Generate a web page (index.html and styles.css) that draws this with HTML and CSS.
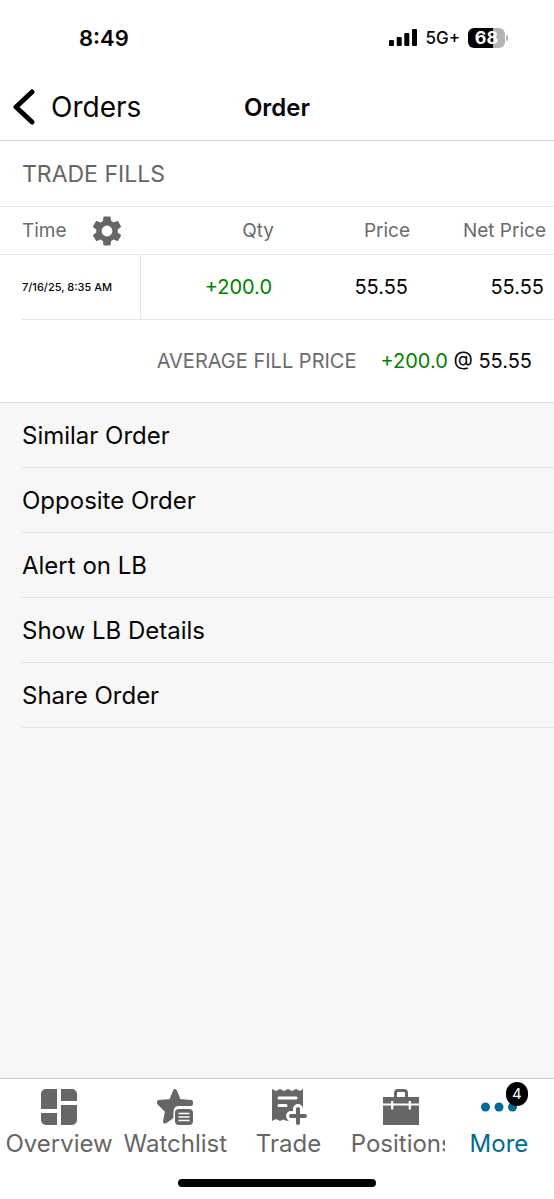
FILE: index.html
```html
<!DOCTYPE html>
<html lang="en">
<head>
<meta charset="utf-8">
<meta name="viewport" content="width=device-width, initial-scale=1">
<title>Order</title>
<link rel="stylesheet" href="styles.css">
</head>
<body>
<div class="app">
  <div class="status">
    <span class="clock">8:49</span>
    <div class="indicators">
      <svg class="signal" viewBox="0 0 28 18" aria-hidden="true">
        <rect x="0" y="11" width="5" height="6" rx="1"/><rect x="7.7" y="8" width="5" height="9" rx="1"/><rect x="15.3" y="4" width="5" height="13" rx="1"/><rect x="23" y="0" width="5" height="17" rx="1"/>
      </svg>
      <span class="network">5G+</span>
      <span class="battery">68</span>
    </div>
  </div>
  <header class="header">
    <button class="back" type="button">
      <svg class="chevron" viewBox="0 0 22 36" aria-hidden="true"><path d="M19 3 3 18l16 15"/></svg>
      <span>Orders</span>
    </button>
    <h1 class="title">Order</h1>
  </header>
  <main class="content">
    <section class="fills">
      <h2 class="section-title">TRADE FILLS</h2>
      <table class="table">
        <thead>
          <tr>
            <th class="time"><div class="time-head">Time
              <button class="settings" type="button" aria-label="Column settings">
                <svg viewBox="2 2 20 20" aria-hidden="true"><path d="M19.14 12.94c.04-.3.06-.61.06-.94s-.02-.64-.07-.94l2.03-1.58a.49.49 0 0 0 .12-.61l-1.92-3.32a.49.49 0 0 0-.59-.22l-2.39.96a7 7 0 0 0-1.62-.94l-.36-2.54a.48.48 0 0 0-.48-.41h-3.84a.47.47 0 0 0-.47.41l-.36 2.54c-.59.24-1.13.57-1.62.94l-2.39-.96a.48.48 0 0 0-.59.22L2.74 8.87a.47.47 0 0 0 .12.61l2.03 1.58a6 6 0 0 0 0 1.88l-2.03 1.58a.49.49 0 0 0-.12.61l1.92 3.32c.12.22.37.29.59.22l2.39-.96c.5.38 1.03.7 1.62.94l.36 2.54c.05.24.24.41.48.41h3.84c.24 0 .44-.17.47-.41l.36-2.54a6.5 6.5 0 0 0 1.62-.94l2.39.96c.22.08.47 0 .59-.22l1.92-3.32a.47.47 0 0 0-.12-.61zM12 15.600a3.600 3.600 0 1 1 0-7.200 3.600 3.600 0 0 1 0 7.200"/></svg>
              </button></div></th>
            <th>Qty</th><th>Price</th><th>Net Price</th>
          </tr>
        </thead>
        <tbody>
          <tr><td class="time"><div class="stamp"><div class="stamp-text">7/16/25, 8:35 AM</div></div></td><td class="green">+200.0</td><td>55.55</td><td>55.55</td></tr>
        </tbody>
      </table>
      <div class="average"><span class="average-label">AVERAGE FILL PRICE</span><span><span class="green">+200.0</span> @ 55.55</span></div>
    </section>
    <div class="actions">
      <button class="action" type="button">Similar Order</button>
      <button class="action" type="button">Opposite Order</button>
      <button class="action" type="button">Alert on LB</button>
      <button class="action" type="button">Show LB Details</button>
      <button class="action" type="button">Share Order</button>
    </div>
  </main>
  <footer class="footer">
    <nav class="tabs">
      <a class="tab" href="#overview">
        <svg class="icon" viewBox="0 0 36 36" aria-hidden="true"><path d="M5 0h11v20H0V5a5 5 0 0 1 5-5M20 0h11a5 5 0 0 1 5 5v7H20zM0 24h16v12H5a5 5 0 0 1-5-5zM20 16h16v15a5 5 0 0 1-5 5H20z"/></svg>
        <span>Overview</span></a>
      <a class="tab" href="#watchlist">
        <svg class="icon" viewBox="0 0 36 36" aria-hidden="true"><path class="star" d="M18 2 22 12l12 1v2H22q-7 0-7.500 7v6L8 32.500 10 22 2 14v-1l12-1z"/><rect x="18" y="20" width="18" height="16" rx="4"/><path class="cut" d="M21.500 24.500h11M21.500 28h11M21.500 31.500h11" stroke-width="1.600"/></svg>
        <span>Watchlist</span></a>
      <a class="tab" href="#trade">
        <svg class="icon" viewBox="0 0 36 36" aria-hidden="true"><path d="m1 0 4 2 4-2 4 2 4-2 4 2 4-2 4 2 3-2v32l-4-1.500-4 1.500-4-1.500-4 1.500-4-1.500L9 32l-4-2-4 2z"/><path class="cut round" d="M8 9h17M8 16.500h7" stroke-width="3"/><path class="cut round" d="M27 20v14M20 27h14" stroke-width="10"/><path class="plus" d="M27 20v14M20 27h14"/></svg>
        <span>Trade</span></a>
      <a class="tab" href="#positions">
        <svg class="icon" viewBox="0 0 36 36" aria-hidden="true"><path d="M0 8h36v28H0z"/><path class="handle" d="M12.500 8V4q0-2.500 2.500-2.500h6q2.500 0 2.500 2.500v4"/><path class="cut" d="M0 15.500h36M9.200 12v8.500M26.800 12v8.500" stroke-width="2.200"/></svg>
        <span class="clipped">Positions</span></a>
      <a class="tab tab-active" href="#more" aria-current="page">
        <span class="icon-wrap"><svg class="icon" viewBox="0 0 36 36" aria-hidden="true"><circle cx="4.500" cy="18" r="4.500"/><circle cx="18" cy="18" r="4.500"/><circle cx="31.500" cy="18" r="4.500"/></svg><span class="badge">4</span></span>
        <span>More</span></a>
    </nav>
    <div class="home"></div>
  </footer>
</div>
</body>
</html>
```
FILE: styles.css
```css
* { box-sizing: border-box; }
body {
  margin: 0;
  background: #fff;
  color: #050505;
  font-family: Inter, "Liberation Sans", sans-serif;
  font-size: 20px;
}
button {
  padding: 0;
  border: 0;
  background: none;
  color: inherit;
  font: inherit;
  cursor: pointer;
}
.app { display: flex; flex-direction: column; min-height: 100vh; }
.status {
  display: flex;
  align-items: center;
  justify-content: space-between;
  height: 74px;
  padding: 2px 49px 0 79px;
}
.clock { font-size: 22px; font-weight: 600; }
.indicators { display: flex; align-items: center; gap: 8px; }
.signal { width: 28px; height: 18px; }
.network { font-size: 17px; font-weight: 500; }
.battery {
  position: relative;
  width: 37px;
  height: 20px;
  border-radius: 6px;
  background: linear-gradient(90deg, #000 68%, #b4b4b4 68%);
  color: #fff;
  font-size: 18px;
  font-weight: 700;
  line-height: 20px;
  text-align: center;
}
.battery::after {
  content: "";
  position: absolute;
  top: 7px;
  right: -3px;
  width: 2px;
  height: 6px;
  border-radius: 0 2px 2px 0;
  background: #b4b4b4;
}
.header {
  display: grid;
  grid-template-columns: 1fr auto 1fr;
  align-items: center;
  height: 67px;
  padding: 0 13px;
  border-bottom: 1px solid #d2d2d2;
}
.back { display: flex; align-items: center; gap: 16px; font-size: 28px; }
.chevron {
  width: 22px;
  height: 36px;
  fill: none;
  stroke: #000;
  stroke-width: 5;
  stroke-linecap: round;
  stroke-linejoin: round;
}
.title { margin: 0; font-size: 24px; font-weight: 600; }
.content { flex: 1; background: #f7f7f7; }
.fills { background: #fff; border-bottom: 1px solid #e2e2e2; }
.section-title {
  margin: 0;
  padding: 2px 22px 0;
  color: #666;
  font-size: 23px;
  font-weight: 400;
  line-height: 63px;
  border-bottom: 1px solid #ebebeb;
}
.table { width: 100%; border-collapse: separate; border-spacing: 0; table-layout: fixed; }
.table th { height: 48px; padding: 0 8px 0 0; color: #6b6b6b; font-size: 19px; font-weight: 400; text-align: right; border-bottom: 1px solid #e6e6e6; }
.table td { height: 65px; padding: 0 10px 0 0; text-align: right; border-bottom: 1px solid #e6e6e6; }
.table .time { width: 146px; padding: 0; text-align: left; }
.table th.time { padding-left: 22px; }
.table td.time { padding-left: 22px; border-bottom: 0; }
.time-head { display: flex; align-items: center; gap: 25px; }
.settings { width: 30px; height: 30px; }
.settings svg { display: block; fill: #666; }
.stamp { height: 65px; border-bottom: 1px solid #e6e6e6; }
.stamp-text {
  display: flex;
  align-items: center;
  width: 119px;
  height: 100%;
  border-right: 1px solid #e6e6e6;
  font-size: 11px;
  font-weight: 500;
}
.green { color: #008000; }
.average {
  display: flex;
  align-items: center;
  justify-content: flex-end;
  gap: 24px;
  height: 82px;
  padding-right: 22px;
}
.average-label { color: #6b6b6b; }
.actions { display: flex; flex-direction: column; padding-left: 22px; }
.action { height: 65px; border-bottom: 1px solid #e2e2e2; font-size: 24px; text-align: left; }
.footer { background: #fff; border-top: 1px solid #ccc; }
.tabs { display: grid; grid-template-columns: 118fr 114fr 112fr 112fr 84fr; padding: 10px 13px 0 0; }
.tab {
  display: flex;
  flex-direction: column;
  align-items: center;
  gap: 4px;
  min-width: 0;
  color: #666;
  font-size: 24px;
  line-height: 30px;
  text-decoration: none;
}
.icon { display: block; width: 36px; height: 36px; fill: currentColor; }
.star { stroke: currentColor; stroke-width: 4; stroke-linejoin: round; }
.cut { fill: none; stroke: #fff; }
.round { stroke-linecap: round; }
.handle { fill: none; stroke: currentColor; stroke-width: 3; }
.plus { fill: none; stroke: currentColor; stroke-width: 4; stroke-linecap: round; }
.clipped { width: 94px; margin-right: 6px; overflow: hidden; }
.tab-active { color: #006b94; }
.icon-wrap { position: relative; }
.badge {
  position: absolute;
  top: -7px;
  right: -11px;
  width: 22px;
  height: 24px;
  border-radius: 12px;
  background: #000;
  color: #fff;
  font-size: 15px;
  line-height: 24px;
  text-align: center;
}
.home { width: 198px; height: 8px; margin: 20px auto 12px; border-radius: 4px; background: #000; }
```
